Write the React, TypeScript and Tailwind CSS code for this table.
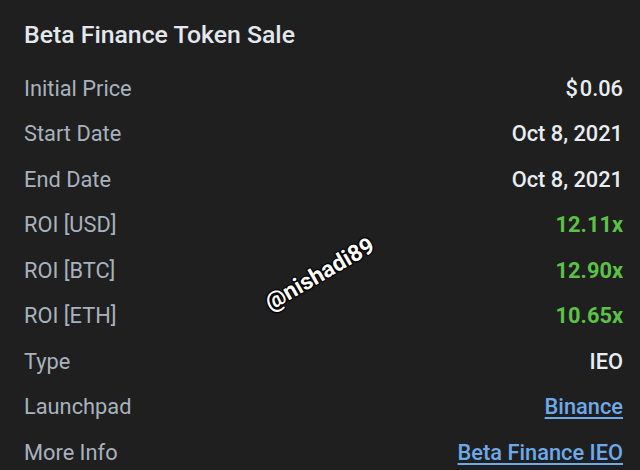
import React from "react";

const rows: { label: string; value: string; kind: "plain" | "green" | "link" }[] = [
  { label: "Initial Price", value: "$0.06", kind: "plain" },
  { label: "Start Date", value: "Oct 8, 2021", kind: "plain" },
  { label: "End Date", value: "Oct 8, 2021", kind: "plain" },
  { label: "ROI [USD]", value: "12.11x", kind: "green" },
  { label: "ROI [BTC]", value: "12.90x", kind: "green" },
  { label: "ROI [ETH]", value: "10.65x", kind: "green" },
  { label: "Type", value: "IEO", kind: "plain" },
  { label: "Launchpad", value: "Binance", kind: "link" },
  { label: "More Info", value: "Beta Finance IEO", kind: "link" },
];

export default function App() {
  return (
    <div className="relative w-[640px] h-[470px] overflow-hidden bg-[#1f1f1f] font-['Roboto',sans-serif]">
      <div className="pl-[24px] pr-[17px]">
        <div className="h-[66.5px] pt-[3px] flex items-center text-[24.8px] font-medium text-[#e3e8ef]">
          Beta Finance Token Sale
        </div>
        {rows.map((r) => (
          <div key={r.label} className="h-[45.5px] flex items-center justify-between text-[21.8px]">
            <span className="text-[#a8b2bd]">{r.label}</span>
            {r.kind === "plain" && (
              <span className="font-medium text-[#e8edf2]">
                {r.value === "$0.06" ? (
                  <>
                    <span className="mr-[2px]">$</span>0.06
                  </>
                ) : (
                  r.value
                )}
              </span>
            )}
            {r.kind === "green" && <span className="font-bold text-[#5cc246]">{r.value}</span>}
            {r.kind === "link" && (
              <span className="font-medium text-[#6ea9ea] underline underline-offset-[3px] decoration-[1.5px]">
                {r.value}
              </span>
            )}
          </div>
        ))}
      </div>
      <div className="absolute left-[267px] top-[288px] -rotate-[30deg] origin-left text-[23px] font-bold text-white font-['Roboto',sans-serif] [text-shadow:0_0_2px_#000,1px_1px_0_#000,-1px_-1px_0_#000,1px_-1px_0_#000,-1px_1px_0_#000]">
        @nishadi89
      </div>
    </div>
  );
}
